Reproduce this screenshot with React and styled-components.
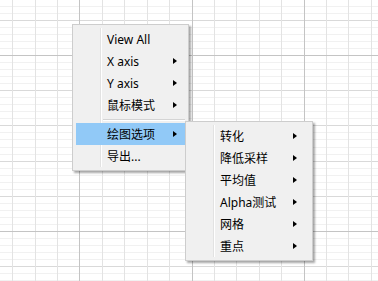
import React from 'react';
import styled, { createGlobalStyle } from 'styled-components';

const GlobalStyle = createGlobalStyle`
  body {
    margin: 0;
    background: #fff;
    font-family: "Noto Sans", "Noto Sans CJK SC", sans-serif;
  }
`;

const Canvas = styled.div`
  position: relative;
  width: 378px;
  height: 281px;
  overflow: hidden;
  background: #fff;
`;

const GridSvg = styled.svg`
  display: block;
`;

const Menu = styled.div`
  position: absolute;
  left: ${props => props.$left}px;
  top: ${props => props.$top}px;
  width: ${props => props.$width}px;
  z-index: ${props => props.$layer};
  box-sizing: border-box;
  display: flex;
  flex-direction: column;
  padding: 3px;
  background: #f0f0f0;
  border: 1px solid #cdcdcd;
  box-shadow: 2px 2px 2px rgba(0, 0, 0, 0.35);

  &::before {
    content: '';
    position: absolute;
    left: 27px;
    top: 3px;
    bottom: 3px;
    width: 1px;
    background: #e2e2e2;
    box-shadow: 1px 0 0 #fff;
  }
`;

const Item = styled.div`
  position: relative;
  z-index: 1;
  height: 22px;
  display: flex;
  align-items: center;
  padding-left: 31px;
  padding-right: ${props => props.$gap}px;
  background: ${props => (props.$active ? '#91c9f7' : 'transparent')};
  color: #000;
  font-size: 12px;
  white-space: nowrap;
`;

const Label = styled.span`
  flex: 1;
`;

const Arrow = styled.span`
  width: 0;
  height: 0;
  border-left: 4px solid #000;
  border-top: 3.5px solid transparent;
  border-bottom: 3.5px solid transparent;
`;

const Separator = styled.div`
  position: relative;
  z-index: 1;
  height: 7px;
  display: flex;
  align-items: center;
  padding-left: 27px;

  &::after {
    content: '';
    flex: 1;
    height: 1px;
    background: #d4d4d4;
    box-shadow: 0 1px 0 #fff;
  }
`;

const mainItems = [
  { label: 'View All' },
  { label: 'X axis', sub: true },
  { label: 'Y axis', sub: true },
  { label: '鼠标模式', sub: true },
  { sep: true },
  { label: '绘图选项', sub: true, active: true },
  { label: '导出...' },
];

const plotItems = ['转化', '降低采样', '平均值', 'Alpha测试', '网格', '重点'].map(label => ({ label, sub: true }));

const PlotGrid = () => {
  const lines = [];
  // horizontal: faint every 7.04, medium every 35.2, dark every 176
  for (let i = -1; i < 42; i++) {
    const y = Math.round(5.72 + 7.04 * i);
    if (y < 0 || y > 281) continue;
    const k = i - 7;
    let color = '#f1f1f1';
    if (k % 5 === 0) color = k % 25 === 0 ? '#c4c4c4' : '#d9d9d9';
    lines.push(<line key={'h' + i} x1="0" x2="378" y1={y + 0.5} y2={y + 0.5} stroke={color} />);
  }
  // vertical: medium every 22.4, dark every 112
  for (let i = 0; i < 17; i++) {
    const x = Math.round(12.3 + 22.4 * i);
    const color = (i - 3) % 5 === 0 ? '#c4c4c4' : '#e3e3e3';
    lines.push(<line key={'v' + i} y1="0" y2="281" x1={x + 0.5} x2={x + 0.5} stroke={color} />);
  }
  // darker lines on top
  lines.sort((a, b) => (a.props.stroke === '#c4c4c4') - (b.props.stroke === '#c4c4c4'));
  return (
    <GridSvg width="378" height="281" shapeRendering="crispEdges">
      {lines}
    </GridSvg>
  );
};

const PopupMenu = ({ items, left, top, width, gap, layer }) => (
  <Menu $left={left} $top={top} $width={width} $layer={layer}>
    {items.map((item, i) =>
      item.sep ? (
        <Separator key={i} />
      ) : (
        <Item key={i} $active={item.active} $gap={gap}>
          <Label>{item.label}</Label>
          {item.sub && <Arrow />}
        </Item>
      )
    )}
  </Menu>
);

export default function App() {
  return (
    <>
      <GlobalStyle />
      <Canvas>
        <PlotGrid />
        <PopupMenu items={mainItems} left={72} top={24} width={117} gap={8} layer={2} />
        <PopupMenu items={plotItems} left={185} top={121} width={128} gap={12} layer={3} />
      </Canvas>
    </>
  );
}
